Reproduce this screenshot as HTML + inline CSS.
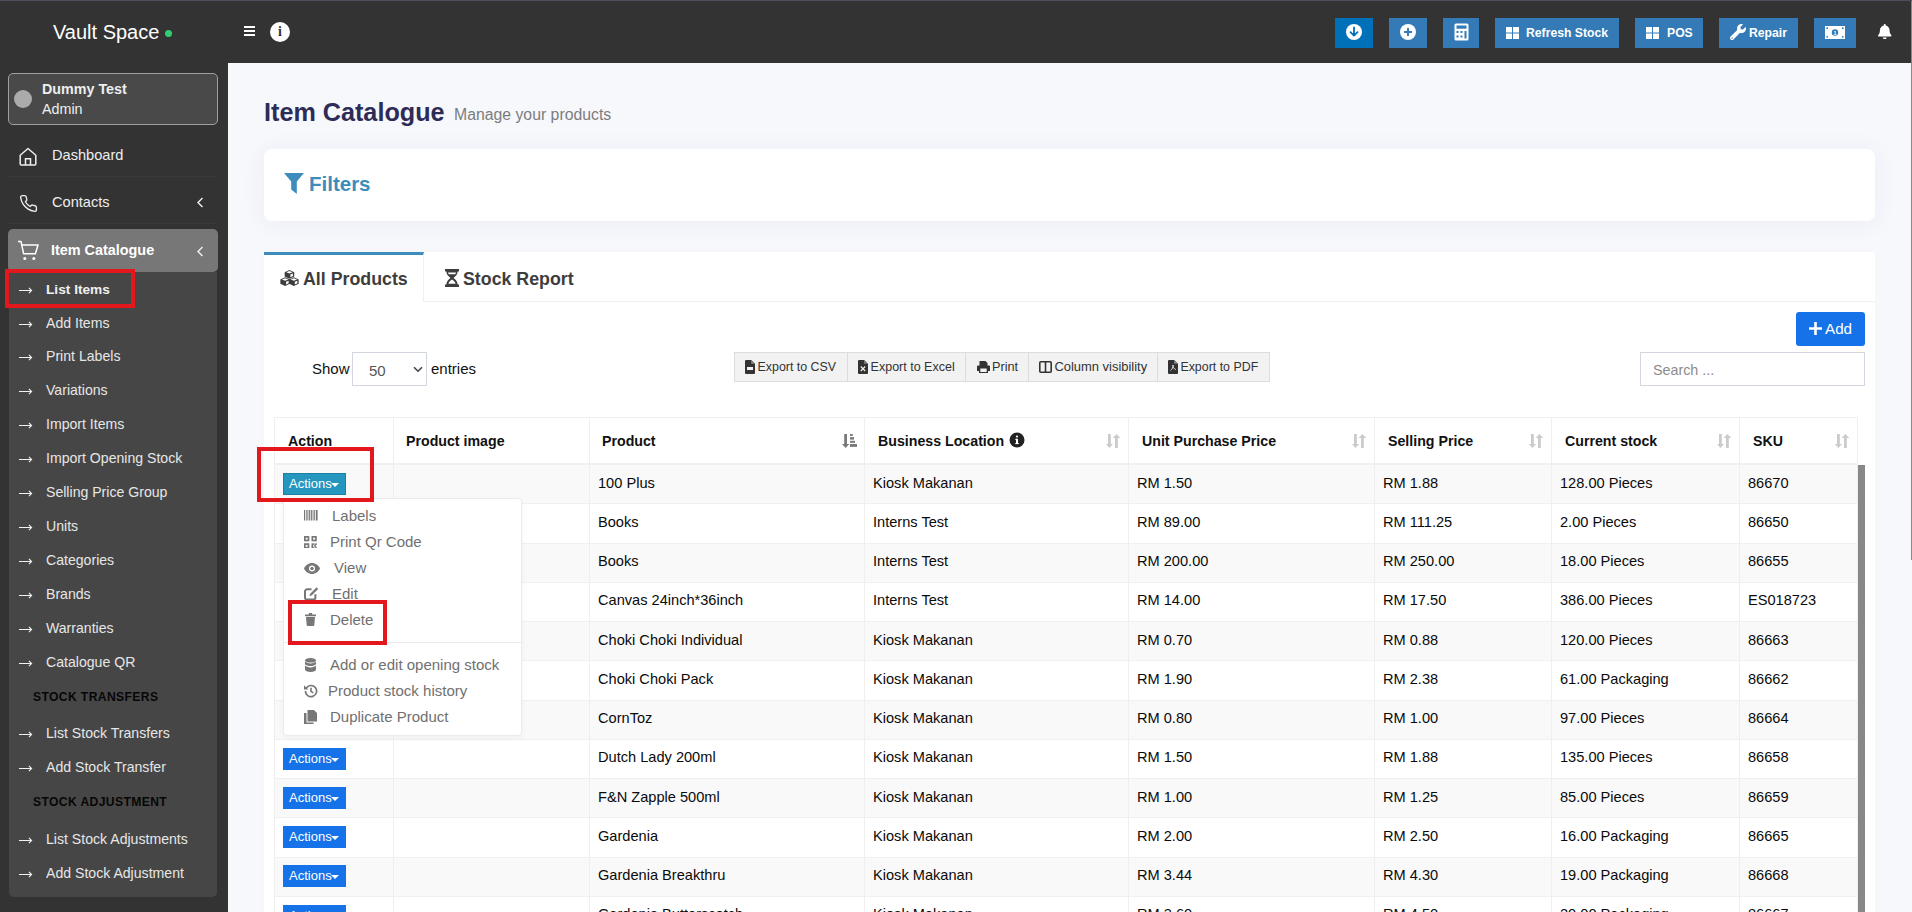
<!DOCTYPE html><html><head><meta charset="utf-8"><style>
*{box-sizing:border-box;margin:0;padding:0}
html,body{width:1912px;height:912px;overflow:hidden}
body{position:relative;background:#f7f8fc;font-family:"Liberation Sans",sans-serif;color:#222}
.a{position:absolute;white-space:nowrap}
#nav{left:0;top:0;width:1912px;height:63px;background:#333}
#topline{left:0;top:0;width:1912px;height:1px;background:#4d5059}
#side{left:0;top:63px;width:228px;height:849px;background:#333}
.brand{left:53px;top:21px;font-size:20px;line-height:23px;color:#fff}
.dot{left:165px;top:30px;width:7px;height:7px;border-radius:50%;background:#2fce73}
.tb{top:18px;height:30px;background:#337ab7;color:#fff;font-weight:bold;font-size:12.2px;line-height:30px}
.ubox{left:8px;top:73px;width:210px;height:52px;background:#494949;border:1px solid #a0a0a0;border-radius:5px}
.menu{left:52px;font-size:14.6px;line-height:17px;color:#eee}
.sep{left:8px;width:210px;height:1px;background:#3a3a3a;border-radius:1px}
.sub{left:46px;font-size:14.1px;line-height:17px;color:#e6e6e6}
.arr{left:19px;width:14px;height:2px}
.hdr{left:33px;font-size:12.1px;line-height:14px;font-weight:bold;color:#060606;letter-spacing:0.4px}
.red{border:4px solid #e3181d}
.card{background:#fff;border-radius:8px;box-shadow:0 2px 26px rgba(40,50,100,0.06)}
.th{top:419px;height:45px;font-weight:bold;font-size:14.2px;color:#111;line-height:45px}
.td{font-size:14.6px;color:#0a0a0a;line-height:16px}
.vl{width:1px;background:#efefef}
.hl{height:1px;background:#efefef}
.act{width:63px;height:22px;color:#fff;font-size:13px;line-height:22px;padding-left:6px}
.dd{font-size:15px;color:#707070;line-height:16px}
.ebtn{top:352px;height:30px;background:#f2f2f2;border:1px solid #dcdcdc;font-size:13px;line-height:28px;color:#333}
</style></head><body>
<div id="nav" class="a"></div><div id="topline" class="a"></div>
<div class="a brand">Vault Space</div><div class="a dot"></div>
<div class="a" style="left:244px;top:26.2px;width:11px;height:1.7px;background:#fff"></div>
<div class="a" style="left:244px;top:30.2px;width:11px;height:1.7px;background:#fff"></div>
<div class="a" style="left:244px;top:34.2px;width:11px;height:1.7px;background:#fff"></div>
<div class="a" style="left:270px;top:22px;width:20px;height:20px;border-radius:50%;background:#fff"></div>
<div class="a" style="left:270px;top:22px;width:20px;height:20px;font-family:'Liberation Serif',serif;font-weight:bold;font-size:14px;line-height:20px;text-align:center;color:#333">i</div>
<div class="a tb" style="left:1335px;width:38px;background:#0071b9"><svg class="a" style="left:10px;top:5px" width="18" height="18" viewBox="0 0 18 18"><circle cx="9" cy="9" r="8" fill="#fff"/><path d="M9 4.5v8M5.5 9.2L9 12.6l3.5-3.4" stroke="#0071b9" stroke-width="1.8" fill="none" stroke-linecap="round" stroke-linejoin="round"/></svg></div>
<div class="a tb" style="left:1389px;width:38px;background:#337ab7"><svg class="a" style="left:10px;top:5px" width="18" height="18" viewBox="0 0 18 18"><circle cx="9" cy="9" r="8" fill="#fff"/><path d="M9 5v8M5 9h8" stroke="#337ab7" stroke-width="1.9" fill="none"/></svg></div>
<div class="a tb" style="left:1443px;width:36px;background:#337ab7"><svg class="a" style="left:10.5px;top:5px" width="15" height="18" viewBox="0 0 15 18"><rect x="0.5" y="0.5" width="14" height="17" rx="1.5" fill="#fff"/><rect x="2.5" y="2.5" width="10" height="3.2" fill="#337ab7"/><g fill="#337ab7"><rect x="2.5" y="8" width="2" height="2"/><rect x="6.5" y="8" width="2" height="2"/><rect x="2.5" y="12.5" width="2" height="2"/><rect x="6.5" y="12.5" width="2" height="2"/><rect x="10.5" y="8" width="2" height="7.5"/></g></svg></div>
<div class="a tb" style="left:1495px;width:124px;background:#337ab7"><svg class="a" style="left:11px;top:9px" width="13" height="12" viewBox="0 0 13 12"><g fill="#fff"><rect x="0" y="0" width="6" height="5.5"/><rect x="7" y="0" width="6" height="5.5"/><rect x="0" y="6.5" width="6" height="5.5"/><rect x="7" y="6.5" width="6" height="5.5"/></g></svg><span class="a" style="left:31px;top:0">Refresh Stock</span></div>
<div class="a tb" style="left:1635px;width:68px;background:#337ab7"><svg class="a" style="left:11px;top:9px" width="13" height="12" viewBox="0 0 13 12"><g fill="#fff"><rect x="0" y="0" width="6" height="5.5"/><rect x="7" y="0" width="6" height="5.5"/><rect x="0" y="6.5" width="6" height="5.5"/><rect x="7" y="6.5" width="6" height="5.5"/></g></svg><span class="a" style="left:32px;top:0">POS</span></div>
<div class="a tb" style="left:1719px;width:79px;background:#337ab7"><svg class="a" style="left:11px;top:6px" width="16" height="16" viewBox="0 0 512 512"><path fill="#fff" d="M507.7 109.1c-2.2-9-13.5-12.1-20.1-5.5l-74.4 74.4-67.9-11.3-11.3-67.9 74.4-74.4c6.6-6.6 3.4-17.9-5.7-20.2-47.4-11.7-99.6.9-136.6 37.9-39.6 39.6-50.5 97.1-34.1 147.2L18.7 402.8c-25 25-25 65.5 0 90.5s65.5 25 90.5 0l213.2-213.2c50.1 16.7 107.5 5.7 147.4-34.2 37.1-37.1 49.7-89.3 37.9-136.8zM64 472c-13.3 0-24-10.7-24-24 0-13.3 10.7-24 24-24s24 10.7 24 24c0 13.3-10.7 24-24 24z"/></svg><span class="a" style="left:30px;top:0">Repair</span></div>
<div class="a tb" style="left:1814px;width:42px;background:#337ab7"><svg class="a" style="left:11px;top:8px" width="20" height="13" viewBox="0 0 20 13"><rect x="0" y="0" width="20" height="13" fill="#fff"/><circle cx="10" cy="6.5" r="3.2" fill="#337ab7"/><text x="10" y="8.8" font-size="5.5" font-family="Liberation Sans" font-weight="bold" fill="#fff" text-anchor="middle">1</text><g fill="#337ab7"><circle cx="2.2" cy="2.2" r="0.9"/><circle cx="17.8" cy="2.2" r="0.9"/><circle cx="2.2" cy="10.8" r="0.9"/><circle cx="17.8" cy="10.8" r="0.9"/></g></svg></div>
<svg class="a" style="left:1878px;top:24px" width="13.5" height="15.4" viewBox="0 0 448 512"><path fill="#fff" d="M224 512c35.3 0 64-28.7 64-64H160c0 35.3 28.7 64 64 64zm215.4-149.7c-19.3-20.8-55.5-52-55.5-154.3 0-77.7-54.5-139.9-127.9-155.2V32c0-17.7-14.3-32-32-32s-32 14.3-32 32v20.8C118.6 68.1 64.100 130.3 64.100 208c0 102.300-36.200 133.500-55.500 154.300-6 6.400-8.700 14.100-8.600 21.700.100 16.400 13 32 32.100 32h383.800c19.100 0 32-15.600 32.100-32 .100-7.600-2.600-15.300-8.600-21.700z"/></svg>
<div class="a" style="left:1910.6px;top:1px;width:1.4px;height:559px;background:#888"></div>
<div id="side" class="a"></div>
<div class="a ubox"></div>
<div class="a" style="left:14px;top:90px;width:18px;height:18px;border-radius:50%;background:#ababab"></div>
<div class="a" style="left:42px;top:81px;font-size:14.3px;line-height:17px;font-weight:bold;color:#eee">Dummy Test</div>
<div class="a" style="left:42px;top:101px;font-size:14.3px;line-height:17px;color:#eee">Admin</div>
<svg class="a" style="left:19px;top:147px" width="18" height="19" viewBox="0 0 18 19"><path d="M1.2 8.2L9 1.5l7.8 6.7V17a1 1 0 0 1-1 1H2.2a1 1 0 0 1-1-1z" fill="none" stroke="#eee" stroke-width="1.5" stroke-linejoin="round"/><path d="M6.5 18v-6.2h5V18" fill="none" stroke="#eee" stroke-width="1.5"/></svg>
<div class="a menu" style="top:147px">Dashboard</div>
<div class="a sep" style="top:176px"></div>
<svg class="a" style="left:19px;top:194px" width="19" height="19" viewBox="0 0 24 24"><path d="M22 16.9v3a2 2 0 0 1-2.2 2 19.8 19.8 0 0 1-8.6-3.1 19.5 19.5 0 0 1-6-6A19.8 19.8 0 0 1 2.1 4.2 2 2 0 0 1 4.1 2h3a2 2 0 0 1 2 1.7c.1 1 .4 1.9.7 2.8a2 2 0 0 1-.5 2.1L8 9.8a16 16 0 0 0 6 6l1.3-1.3a2 2 0 0 1 2.1-.4c.9.3 1.8.6 2.8.7a2 2 0 0 1 1.7 2z" fill="none" stroke="#eee" stroke-width="1.7" stroke-linejoin="round"/></svg>
<div class="a menu" style="top:194px">Contacts</div>
<svg class="a" style="left:196px;top:197px" width="8" height="11" viewBox="0 0 8 11"><path d="M6.5 1L2 5.5 6.5 10" fill="none" stroke="#f2f2f2" stroke-width="1.4"/></svg>
<div class="a sep" style="top:222.5px"></div>
<div class="a" style="left:8px;top:229px;width:210px;height:43px;background:#777;border-radius:5px"></div>
<svg class="a" style="left:17px;top:240px" width="22" height="21" viewBox="0 0 22 21"><path d="M1 1.5h3l2.6 12.2h11.8L21 5H5" fill="none" stroke="#fff" stroke-width="1.5" stroke-linejoin="round"/><circle cx="7.8" cy="18.5" r="1.5" fill="#fff"/><circle cx="16.8" cy="18.5" r="1.5" fill="#fff"/></svg>
<div class="a menu" style="left:51px;top:241.5px;font-weight:bold;color:#fff;font-size:14.4px">Item Catalogue</div>
<svg class="a" style="left:196px;top:245.5px" width="8" height="11" viewBox="0 0 8 11"><path d="M6.5 1L2 5.5 6.5 10" fill="none" stroke="#f2f2f2" stroke-width="1.4"/></svg>
<div class="a" style="left:9px;top:272px;width:208px;height:625px;background:#464646;border-radius:0 0 5px 5px"></div>
<div class="a sub" style="top:281px;font-weight:bold;color:#f0f0f0;font-size:13.7px;">List Items</div>
<svg class="a" style="left:19px;top:286px" width="14" height="8" viewBox="0 0 14 8"><path d="M0 4.5h12.6M9.9 1.9l2.7 2.6-2.7 2.6" fill="none" stroke="#f2f2f2" stroke-width="1.1"/></svg>
<div class="a sub" style="top:315px;">Add Items</div>
<svg class="a" style="left:19px;top:320px" width="14" height="8" viewBox="0 0 14 8"><path d="M0 4.5h12.6M9.9 1.9l2.7 2.6-2.7 2.6" fill="none" stroke="#f2f2f2" stroke-width="1.1"/></svg>
<div class="a sub" style="top:348px;">Print Labels</div>
<svg class="a" style="left:19px;top:353px" width="14" height="8" viewBox="0 0 14 8"><path d="M0 4.5h12.6M9.9 1.9l2.7 2.6-2.7 2.6" fill="none" stroke="#f2f2f2" stroke-width="1.1"/></svg>
<div class="a sub" style="top:382px;">Variations</div>
<svg class="a" style="left:19px;top:387px" width="14" height="8" viewBox="0 0 14 8"><path d="M0 4.5h12.6M9.9 1.9l2.7 2.6-2.7 2.6" fill="none" stroke="#f2f2f2" stroke-width="1.1"/></svg>
<div class="a sub" style="top:416px;">Import Items</div>
<svg class="a" style="left:19px;top:421px" width="14" height="8" viewBox="0 0 14 8"><path d="M0 4.5h12.6M9.9 1.9l2.7 2.6-2.7 2.6" fill="none" stroke="#f2f2f2" stroke-width="1.1"/></svg>
<div class="a sub" style="top:450px;">Import Opening Stock</div>
<svg class="a" style="left:19px;top:455px" width="14" height="8" viewBox="0 0 14 8"><path d="M0 4.5h12.6M9.9 1.9l2.7 2.6-2.7 2.6" fill="none" stroke="#f2f2f2" stroke-width="1.1"/></svg>
<div class="a sub" style="top:484px;">Selling Price Group</div>
<svg class="a" style="left:19px;top:489px" width="14" height="8" viewBox="0 0 14 8"><path d="M0 4.5h12.6M9.9 1.9l2.7 2.6-2.7 2.6" fill="none" stroke="#f2f2f2" stroke-width="1.1"/></svg>
<div class="a sub" style="top:518px;">Units</div>
<svg class="a" style="left:19px;top:523px" width="14" height="8" viewBox="0 0 14 8"><path d="M0 4.5h12.6M9.9 1.9l2.7 2.6-2.7 2.6" fill="none" stroke="#f2f2f2" stroke-width="1.1"/></svg>
<div class="a sub" style="top:552px;">Categories</div>
<svg class="a" style="left:19px;top:557px" width="14" height="8" viewBox="0 0 14 8"><path d="M0 4.5h12.6M9.9 1.9l2.7 2.6-2.7 2.6" fill="none" stroke="#f2f2f2" stroke-width="1.1"/></svg>
<div class="a sub" style="top:586px;">Brands</div>
<svg class="a" style="left:19px;top:591px" width="14" height="8" viewBox="0 0 14 8"><path d="M0 4.5h12.6M9.9 1.9l2.7 2.6-2.7 2.6" fill="none" stroke="#f2f2f2" stroke-width="1.1"/></svg>
<div class="a sub" style="top:620px;">Warranties</div>
<svg class="a" style="left:19px;top:625px" width="14" height="8" viewBox="0 0 14 8"><path d="M0 4.5h12.6M9.9 1.9l2.7 2.6-2.7 2.6" fill="none" stroke="#f2f2f2" stroke-width="1.1"/></svg>
<div class="a sub" style="top:654px;">Catalogue QR</div>
<svg class="a" style="left:19px;top:659px" width="14" height="8" viewBox="0 0 14 8"><path d="M0 4.5h12.6M9.9 1.9l2.7 2.6-2.7 2.6" fill="none" stroke="#f2f2f2" stroke-width="1.1"/></svg>
<div class="a hdr" style="top:690px">STOCK TRANSFERS</div>
<div class="a sub" style="top:725px;">List Stock Transfers</div>
<svg class="a" style="left:19px;top:730px" width="14" height="8" viewBox="0 0 14 8"><path d="M0 4.5h12.6M9.9 1.9l2.7 2.6-2.7 2.6" fill="none" stroke="#f2f2f2" stroke-width="1.1"/></svg>
<div class="a sub" style="top:759px;">Add Stock Transfer</div>
<svg class="a" style="left:19px;top:764px" width="14" height="8" viewBox="0 0 14 8"><path d="M0 4.5h12.6M9.9 1.9l2.7 2.6-2.7 2.6" fill="none" stroke="#f2f2f2" stroke-width="1.1"/></svg>
<div class="a hdr" style="top:795px">STOCK ADJUSTMENT</div>
<div class="a sub" style="top:831px;">List Stock Adjustments</div>
<svg class="a" style="left:19px;top:836px" width="14" height="8" viewBox="0 0 14 8"><path d="M0 4.5h12.6M9.9 1.9l2.7 2.6-2.7 2.6" fill="none" stroke="#f2f2f2" stroke-width="1.1"/></svg>
<div class="a sub" style="top:865px;">Add Stock Adjustment</div>
<svg class="a" style="left:19px;top:870px" width="14" height="8" viewBox="0 0 14 8"><path d="M0 4.5h12.6M9.9 1.9l2.7 2.6-2.7 2.6" fill="none" stroke="#f2f2f2" stroke-width="1.1"/></svg>
<div class="a red" style="left:5px;top:269px;width:130px;height:39px"></div>
<div class="a" style="left:264px;top:98px;font-size:25.2px;line-height:28px;font-weight:bold;color:#2d2c57">Item Catalogue</div>
<div class="a" style="left:454px;top:106px;font-size:15.8px;line-height:18px;color:#7c7c7c">Manage your products</div>
<div class="a card" style="left:264px;top:149px;width:1611px;height:72px"></div>
<svg class="a" style="left:284px;top:173px" width="20" height="21" viewBox="0 0 20 21"><path d="M0 0h20l-7.2 8.4V21L7.2 16.5V8.4z" fill="#3c8dbc"/></svg>
<div class="a" style="left:309px;top:172px;font-size:20.5px;line-height:23px;font-weight:bold;color:#3c8dbc">Filters</div>
<div class="a" style="left:264px;top:252px;width:1611px;height:700px;background:#fff;border-radius:3px;box-shadow:0 0 10px rgba(40,50,100,0.015)"></div>
<div class="a" style="left:264px;top:301px;width:1611px;height:1px;background:#f0f0f0"></div>
<div class="a" style="left:264px;top:252px;width:160px;height:50px;background:#fff;border-top:3px solid #3c8dbc;border-right:1px solid #f0f0f0"></div>
<svg class="a" style="left:280px;top:270px" width="19" height="16" viewBox="0 0 18.2 15.9"><path d="M4.30 2.20 L9.05 0.00 L13.80 2.20 L13.80 6.50 L9.05 8.70 L4.30 6.50z M0.00 9.40 L4.75 7.20 L9.50 9.40 L9.50 13.70 L4.75 15.90 L0.00 13.70z M8.70 9.40 L13.45 7.20 L18.20 9.40 L18.20 13.70 L13.45 15.90 L8.70 13.70z" fill="#3d3d3d"/><path d="M5.90 2.25 L9.05 0.95 L12.20 2.25 L9.05 3.55z M10.00 4.50 L12.50 3.40 L12.50 6.00 L10.00 7.20z M1.60 9.45 L4.75 8.15 L7.90 9.45 L4.75 10.75z M5.70 11.70 L8.20 10.60 L8.20 13.20 L5.70 14.40z M10.30 9.45 L13.45 8.15 L16.60 9.45 L13.45 10.75z M14.40 11.70 L16.90 10.60 L16.90 13.20 L14.40 14.40z" fill="#fff"/></svg>
<div class="a" style="left:303px;top:269px;font-size:17.8px;line-height:20px;font-weight:bold;color:#3d3d3d">All Products</div>
<svg class="a" style="left:445px;top:269px" width="14" height="18" viewBox="0 0 14 18"><path d="M0 0h14v2.6h-1.4c0 2.8-1.9 4.8-4.1 6.4 2.2 1.6 4.1 3.6 4.1 6.4H14V18H0v-2.6h1.4c0-2.8 1.9-4.8 4.1-6.4C3.3 7.4 1.4 5.4 1.4 2.6H0z" fill="#3d3d3d"/><path d="M3 3.4h8c-.2 .8-.5 1.3-.8 1.8H3.8C3.5 4.7 3.2 4.2 3 3.4z M7 10.4c1.9 1.3 3.3 2.6 3.6 4.3H3.4C3.7 13 5.1 11.7 7 10.4z" fill="#fff"/></svg>
<div class="a" style="left:463px;top:269px;font-size:17.8px;line-height:20px;font-weight:bold;color:#3d3d3d">Stock Report</div>
<div class="a" style="left:1796px;top:312px;width:69px;height:34px;background:#1572e8;border-radius:3px;color:#fff;font-size:15px;line-height:34px"><svg class="a" style="left:13px;top:10px" width="13" height="13" viewBox="0 0 13 13"><path d="M6.5 0v13M0 6.5h13" stroke="#fff" stroke-width="2.6"/></svg><span class="a" style="left:29px;top:0;font-size:15.2px">Add</span></div>
<div class="a" style="left:1640px;top:352px;width:225px;height:34px;border:1px solid #d2d6de;background:#fff"><span class="a" style="left:12px;top:9px;font-size:14.3px;line-height:16px;color:#8b8b8b">Search ...</span></div>
<div class="a" style="left:312px;top:360px;font-size:15px;line-height:17px;color:#111">Show</div>
<div class="a" style="left:352px;top:352px;width:75px;height:34px;border:1px solid #d2d6de;background:#fff"><span class="a" style="left:16px;top:9px;font-size:15px;line-height:17px;color:#555">50</span><svg class="a" style="left:60px;top:13px" width="10" height="7" viewBox="0 0 10 7"><path d="M1 1.2l4 4 4-4" fill="none" stroke="#444" stroke-width="1.6"/></svg></div>
<div class="a" style="left:431px;top:360px;font-size:15px;line-height:17px;color:#111">entries</div>
<div class="a ebtn" style="left:734px;width:114px"><svg class="a" style="left:10px;top:7px" width="10" height="14" viewBox="0 0 10 14"><path d="M0 1a1 1 0 0 1 1-1h5.2L10 3.8V13a1 1 0 0 1-1 1H1a1 1 0 0 1-1-1z" fill="#333"/><path d="M6.2 0v3.8H10" fill="#888"/><rect x="2" y="7" width="6" height="3" fill="#f2f2f2"/></svg><span class="a" style="left:22.6px;top:0;font-size:12.4px">Export to CSV</span></div>
<div class="a ebtn" style="left:847px;width:119px"><svg class="a" style="left:10px;top:7px" width="10" height="14" viewBox="0 0 10 14"><path d="M0 1a1 1 0 0 1 1-1h5.2L10 3.8V13a1 1 0 0 1-1 1H1a1 1 0 0 1-1-1z" fill="#333"/><path d="M6.2 0v3.8H10" fill="#888"/><path d="M2.8 6.5l4.4 4.5M7.2 6.5l-4.4 4.5" stroke="#f2f2f2" stroke-width="1.1"/></svg><span class="a" style="left:22.6px;top:0;font-size:12.5px">Export to Excel</span></div>
<div class="a ebtn" style="left:965px;width:64px"><svg class="a" style="left:11px;top:8px" width="13" height="12" viewBox="0 0 13 12"><path d="M2.5 0h6l2 2v2.5h-8z M1 4.5h11a1 1 0 0 1 1 1V10h-2v2H2v-2H0V5.5a1 1 0 0 1 1-1z" fill="#333"/><rect x="3.3" y="7.5" width="6.4" height="3.5" fill="#f2f2f2"/></svg><span class="a" style="left:26px;top:0;font-size:12.7px">Print</span></div>
<div class="a ebtn" style="left:1028px;width:130px"><svg class="a" style="left:10px;top:8px" width="13" height="12" viewBox="0 0 13 12"><rect x="0.8" y="0.8" width="11.4" height="10.4" rx="1" fill="none" stroke="#333" stroke-width="1.6"/><path d="M6.5 1v10" stroke="#333" stroke-width="1.6"/></svg><span class="a" style="left:25.4px;top:0;font-size:12.95px">Column visibility</span></div>
<div class="a ebtn" style="left:1157px;width:113px"><svg class="a" style="left:10px;top:7px" width="10" height="14" viewBox="0 0 10 14"><path d="M0 1a1 1 0 0 1 1-1h5.2L10 3.8V13a1 1 0 0 1-1 1H1a1 1 0 0 1-1-1z" fill="#333"/><path d="M6.2 0v3.8H10" fill="#888"/><path d="M2.5 10.5c1.5-1 3-3.5 2.5-5.5-.5 2 1 4 2.8 4.5" fill="none" stroke="#f2f2f2" stroke-width="0.9"/></svg><span class="a" style="left:22.4px;top:0;font-size:12.4px">Export to PDF</span></div>
<div class="a" style="left:274px;top:417px;width:1584px;height:1px;background:#efefef"></div>
<div class="a" style="left:274px;top:463px;width:1584px;height:2px;background:#f0f0f0"></div>
<div class="a" style="left:274px;top:465.00px;width:1584px;height:38.30px;background:#f9f9f9"></div>
<div class="a" style="left:274px;top:504.30px;width:1584px;height:38.25px;background:#fff"></div>
<div class="a hl" style="left:274px;top:503.30px;width:1584px;background:#f0f0f0"></div>
<div class="a" style="left:274px;top:543.55px;width:1584px;height:38.25px;background:#f9f9f9"></div>
<div class="a hl" style="left:274px;top:542.55px;width:1584px;background:#f0f0f0"></div>
<div class="a" style="left:274px;top:582.80px;width:1584px;height:38.25px;background:#fff"></div>
<div class="a hl" style="left:274px;top:581.80px;width:1584px;background:#f0f0f0"></div>
<div class="a" style="left:274px;top:622.05px;width:1584px;height:38.25px;background:#f9f9f9"></div>
<div class="a hl" style="left:274px;top:621.05px;width:1584px;background:#f0f0f0"></div>
<div class="a" style="left:274px;top:661.30px;width:1584px;height:38.25px;background:#fff"></div>
<div class="a hl" style="left:274px;top:660.30px;width:1584px;background:#f0f0f0"></div>
<div class="a" style="left:274px;top:700.55px;width:1584px;height:38.25px;background:#f9f9f9"></div>
<div class="a hl" style="left:274px;top:699.55px;width:1584px;background:#f0f0f0"></div>
<div class="a" style="left:274px;top:739.80px;width:1584px;height:38.25px;background:#fff"></div>
<div class="a hl" style="left:274px;top:738.80px;width:1584px;background:#f0f0f0"></div>
<div class="a" style="left:274px;top:779.05px;width:1584px;height:38.25px;background:#f9f9f9"></div>
<div class="a hl" style="left:274px;top:778.05px;width:1584px;background:#f0f0f0"></div>
<div class="a" style="left:274px;top:818.30px;width:1584px;height:38.25px;background:#fff"></div>
<div class="a hl" style="left:274px;top:817.30px;width:1584px;background:#f0f0f0"></div>
<div class="a" style="left:274px;top:857.55px;width:1584px;height:38.25px;background:#f9f9f9"></div>
<div class="a hl" style="left:274px;top:856.55px;width:1584px;background:#f0f0f0"></div>
<div class="a" style="left:274px;top:896.80px;width:1584px;height:38.25px;background:#fff"></div>
<div class="a hl" style="left:274px;top:895.80px;width:1584px;background:#f0f0f0"></div>
<div class="a vl" style="left:274px;top:417px;height:495px"></div>
<div class="a vl" style="left:393px;top:417px;height:495px"></div>
<div class="a vl" style="left:589px;top:417px;height:495px"></div>
<div class="a vl" style="left:864px;top:417px;height:495px"></div>
<div class="a vl" style="left:1128px;top:417px;height:495px"></div>
<div class="a vl" style="left:1374px;top:417px;height:495px"></div>
<div class="a vl" style="left:1551px;top:417px;height:495px"></div>
<div class="a vl" style="left:1739px;top:417px;height:495px"></div>
<div class="a vl" style="left:1857px;top:417px;height:495px"></div>
<div class="a th" style="left:288px">Action</div>
<div class="a th" style="left:406px">Product image</div>
<div class="a th" style="left:602px">Product</div>
<div class="a th" style="left:878px">Business Location</div>
<div class="a th" style="left:1142px">Unit Purchase Price</div>
<div class="a th" style="left:1388px">Selling Price</div>
<div class="a th" style="left:1565px">Current stock</div>
<div class="a th" style="left:1753px">SKU</div>
<svg class="a" style="left:1009px;top:432px" width="16" height="16" viewBox="0 0 16 16"><circle cx="8" cy="8" r="7.5" fill="#222"/><rect x="7" y="6.8" width="2" height="5" fill="#fff"/><rect x="6.2" y="11" width="3.6" height="1.1" fill="#fff"/><rect x="6.2" y="6.8" width="2" height="1" fill="#fff"/><circle cx="8" cy="4.5" r="1.1" fill="#fff"/></svg>
<svg class="a" style="left:842px;top:434px" width="15" height="14" viewBox="0 0 15 14"><g fill="#7a7a7a"><path d="M2.2 0h2.8v10H7.2L3.6 14 0 10H2.2z"/><rect x="8" y="0" width="2.8" height="1.9"/><rect x="8" y="3.1" width="4" height="2.5"/><rect x="8" y="6.8" width="5" height="2"/><rect x="8" y="10" width="7" height="2.9"/></g></svg>
<svg class="a" style="left:1106px;top:434px" width="15" height="14" viewBox="0 0 15 14"><g fill="#cbcbcb"><path d="M2 0h2.8v10H7L3.4 14 0 10H2z"/><path d="M9 14h2.8V4H14.3L10.4 0 6.6 4H9z"/></g></svg>
<svg class="a" style="left:1352px;top:434px" width="15" height="14" viewBox="0 0 15 14"><g fill="#cbcbcb"><path d="M2 0h2.8v10H7L3.4 14 0 10H2z"/><path d="M9 14h2.8V4H14.3L10.4 0 6.6 4H9z"/></g></svg>
<svg class="a" style="left:1529px;top:434px" width="15" height="14" viewBox="0 0 15 14"><g fill="#cbcbcb"><path d="M2 0h2.8v10H7L3.4 14 0 10H2z"/><path d="M9 14h2.8V4H14.3L10.4 0 6.6 4H9z"/></g></svg>
<svg class="a" style="left:1717px;top:434px" width="15" height="14" viewBox="0 0 15 14"><g fill="#cbcbcb"><path d="M2 0h2.8v10H7L3.4 14 0 10H2z"/><path d="M9 14h2.8V4H14.3L10.4 0 6.6 4H9z"/></g></svg>
<svg class="a" style="left:1835px;top:434px" width="15" height="14" viewBox="0 0 15 14"><g fill="#cbcbcb"><path d="M2 0h2.8v10H7L3.4 14 0 10H2z"/><path d="M9 14h2.8V4H14.3L10.4 0 6.6 4H9z"/></g></svg>
<div class="a td" style="left:598px;top:474.50px">100 Plus</div>
<div class="a td" style="left:873px;top:474.50px">Kiosk Makanan</div>
<div class="a td" style="left:1137px;top:474.50px">RM 1.50</div>
<div class="a td" style="left:1383px;top:474.50px">RM 1.88</div>
<div class="a td" style="left:1560px;top:474.50px">128.00 Pieces</div>
<div class="a td" style="left:1748px;top:474.50px">86670</div>
<div class="a act" style="left:283px;top:472.95px;background:#2596be;border:1px solid #1d7fa3;line-height:20px;padding-left:5px">Actions<svg class="a" style="left:47px;top:9px" width="8" height="4" viewBox="0 0 8 4"><path d="M0 0h8L4 4z" fill="#fff"/></svg></div>
<div class="a td" style="left:598px;top:513.77px">Books</div>
<div class="a td" style="left:873px;top:513.77px">Interns Test</div>
<div class="a td" style="left:1137px;top:513.77px">RM 89.00</div>
<div class="a td" style="left:1383px;top:513.77px">RM 111.25</div>
<div class="a td" style="left:1560px;top:513.77px">2.00 Pieces</div>
<div class="a td" style="left:1748px;top:513.77px">86650</div>
<div class="a td" style="left:598px;top:553.02px">Books</div>
<div class="a td" style="left:873px;top:553.02px">Interns Test</div>
<div class="a td" style="left:1137px;top:553.02px">RM 200.00</div>
<div class="a td" style="left:1383px;top:553.02px">RM 250.00</div>
<div class="a td" style="left:1560px;top:553.02px">18.00 Pieces</div>
<div class="a td" style="left:1748px;top:553.02px">86655</div>
<div class="a td" style="left:598px;top:592.27px">Canvas 24inch*36inch</div>
<div class="a td" style="left:873px;top:592.27px">Interns Test</div>
<div class="a td" style="left:1137px;top:592.27px">RM 14.00</div>
<div class="a td" style="left:1383px;top:592.27px">RM 17.50</div>
<div class="a td" style="left:1560px;top:592.27px">386.00 Pieces</div>
<div class="a td" style="left:1748px;top:592.27px">ES018723</div>
<div class="a td" style="left:598px;top:631.52px">Choki Choki Individual</div>
<div class="a td" style="left:873px;top:631.52px">Kiosk Makanan</div>
<div class="a td" style="left:1137px;top:631.52px">RM 0.70</div>
<div class="a td" style="left:1383px;top:631.52px">RM 0.88</div>
<div class="a td" style="left:1560px;top:631.52px">120.00 Pieces</div>
<div class="a td" style="left:1748px;top:631.52px">86663</div>
<div class="a td" style="left:598px;top:670.77px">Choki Choki Pack</div>
<div class="a td" style="left:873px;top:670.77px">Kiosk Makanan</div>
<div class="a td" style="left:1137px;top:670.77px">RM 1.90</div>
<div class="a td" style="left:1383px;top:670.77px">RM 2.38</div>
<div class="a td" style="left:1560px;top:670.77px">61.00 Packaging</div>
<div class="a td" style="left:1748px;top:670.77px">86662</div>
<div class="a td" style="left:598px;top:710.02px">CornToz</div>
<div class="a td" style="left:873px;top:710.02px">Kiosk Makanan</div>
<div class="a td" style="left:1137px;top:710.02px">RM 0.80</div>
<div class="a td" style="left:1383px;top:710.02px">RM 1.00</div>
<div class="a td" style="left:1560px;top:710.02px">97.00 Pieces</div>
<div class="a td" style="left:1748px;top:710.02px">86664</div>
<div class="a td" style="left:598px;top:749.27px">Dutch Lady 200ml</div>
<div class="a td" style="left:873px;top:749.27px">Kiosk Makanan</div>
<div class="a td" style="left:1137px;top:749.27px">RM 1.50</div>
<div class="a td" style="left:1383px;top:749.27px">RM 1.88</div>
<div class="a td" style="left:1560px;top:749.27px">135.00 Pieces</div>
<div class="a td" style="left:1748px;top:749.27px">86658</div>
<div class="a act" style="left:283px;top:747.72px;background:#1572e8">Actions<svg class="a" style="left:48px;top:10px" width="8" height="4" viewBox="0 0 8 4"><path d="M0 0h8L4 4z" fill="#fff"/></svg></div>
<div class="a td" style="left:598px;top:788.52px">F&amp;N Zapple 500ml</div>
<div class="a td" style="left:873px;top:788.52px">Kiosk Makanan</div>
<div class="a td" style="left:1137px;top:788.52px">RM 1.00</div>
<div class="a td" style="left:1383px;top:788.52px">RM 1.25</div>
<div class="a td" style="left:1560px;top:788.52px">85.00 Pieces</div>
<div class="a td" style="left:1748px;top:788.52px">86659</div>
<div class="a act" style="left:283px;top:786.97px;background:#1572e8">Actions<svg class="a" style="left:48px;top:10px" width="8" height="4" viewBox="0 0 8 4"><path d="M0 0h8L4 4z" fill="#fff"/></svg></div>
<div class="a td" style="left:598px;top:827.77px">Gardenia</div>
<div class="a td" style="left:873px;top:827.77px">Kiosk Makanan</div>
<div class="a td" style="left:1137px;top:827.77px">RM 2.00</div>
<div class="a td" style="left:1383px;top:827.77px">RM 2.50</div>
<div class="a td" style="left:1560px;top:827.77px">16.00 Packaging</div>
<div class="a td" style="left:1748px;top:827.77px">86665</div>
<div class="a act" style="left:283px;top:826.22px;background:#1572e8">Actions<svg class="a" style="left:48px;top:10px" width="8" height="4" viewBox="0 0 8 4"><path d="M0 0h8L4 4z" fill="#fff"/></svg></div>
<div class="a td" style="left:598px;top:867.02px">Gardenia Breakthru</div>
<div class="a td" style="left:873px;top:867.02px">Kiosk Makanan</div>
<div class="a td" style="left:1137px;top:867.02px">RM 3.44</div>
<div class="a td" style="left:1383px;top:867.02px">RM 4.30</div>
<div class="a td" style="left:1560px;top:867.02px">19.00 Packaging</div>
<div class="a td" style="left:1748px;top:867.02px">86668</div>
<div class="a act" style="left:283px;top:865.47px;background:#1572e8">Actions<svg class="a" style="left:48px;top:10px" width="8" height="4" viewBox="0 0 8 4"><path d="M0 0h8L4 4z" fill="#fff"/></svg></div>
<div class="a td" style="left:598px;top:906.27px">Gardenia Butterscotch</div>
<div class="a td" style="left:873px;top:906.27px">Kiosk Makanan</div>
<div class="a td" style="left:1137px;top:906.27px">RM 3.60</div>
<div class="a td" style="left:1383px;top:906.27px">RM 4.50</div>
<div class="a td" style="left:1560px;top:906.27px">20.00 Packaging</div>
<div class="a td" style="left:1748px;top:906.27px">86667</div>
<div class="a act" style="left:283px;top:904.72px;background:#1572e8">Actions<svg class="a" style="left:48px;top:10px" width="8" height="4" viewBox="0 0 8 4"><path d="M0 0h8L4 4z" fill="#fff"/></svg></div>
<div class="a" style="left:1858px;top:465px;width:7px;height:447px;background:#888"></div>
<div class="a" style="left:283px;top:497.5px;width:239px;height:238px;background:#fff;border:1px solid #ebebeb;border-radius:4px;box-shadow:0 2px 6px rgba(0,0,0,0.04)"></div>
<div class="a" style="left:284px;top:642px;width:237px;height:1px;background:#e9e9e9"></div>
<div class="a dd" style="left:332px;top:508px">Labels</div>
<div class="a dd" style="left:330px;top:534px">Print Qr Code</div>
<div class="a dd" style="left:334px;top:560px">View</div>
<div class="a dd" style="left:332px;top:586px">Edit</div>
<div class="a dd" style="left:330px;top:612px">Delete</div>
<div class="a dd" style="left:330px;top:657px">Add or edit opening stock</div>
<div class="a dd" style="left:328px;top:683px">Product stock history</div>
<div class="a dd" style="left:330px;top:709px">Duplicate Product</div>
<svg class="a" style="left:304px;top:510px" width="14" height="11" viewBox="0 0 14 11"><g fill="#777"><rect x="0" y="0" width="1" height="10.5"/><rect x="1.8" y="0" width="0.9" height="10.5"/><rect x="3.4" y="0" width="1" height="10.5"/><rect x="5.1" y="0" width="0.9" height="10.5"/><rect x="6.7" y="0" width="1.2" height="10.5"/><rect x="8.6" y="0" width="0.9" height="10.5"/><rect x="10.2" y="0" width="1" height="10.5"/><rect x="12" y="0" width="1.6" height="10.5"/></g></svg>
<svg class="a" style="left:304px;top:535.5px" width="13" height="12.5" viewBox="0 0 13 12.5"><g fill="none" stroke="#777" stroke-width="1.7"><rect x="0.85" y="0.85" width="3.6" height="3.6"/><rect x="8.35" y="0.85" width="3.6" height="3.6"/><rect x="0.85" y="8.1" width="3.6" height="3.6"/></g><g fill="#777"><rect x="7.5" y="7.3" width="1.7" height="5.2"/><rect x="9.2" y="7.3" width="1.3" height="1.7"/><rect x="10.3" y="8.8" width="1.7" height="2"/><rect x="11.2" y="7.3" width="1.6" height="1.7"/><rect x="11.2" y="10.8" width="1.6" height="1.7"/><rect x="9.2" y="10.8" width="1.2" height="1.7"/></g></svg>
<svg class="a" style="left:304px;top:563px" width="16" height="11" viewBox="0 0 16 11"><path d="M8 0C4.5 0 1.5 2.3 0 5.5 1.5 8.7 4.5 11 8 11s6.5-2.3 8-5.5C14.5 2.3 11.5 0 8 0z" fill="#777"/><circle cx="8" cy="5.5" r="3" fill="#fff"/><circle cx="8" cy="5.5" r="1.7" fill="#777"/></svg>
<svg class="a" style="left:304px;top:586.5px" width="14.5" height="13.5" viewBox="0 0 14.5 13.5"><path d="M7.5 2.2H3.2A2.2 2.2 0 0 0 1 4.4v6A2.2 2.2 0 0 0 3.2 12.6h6a2.2 2.2 0 0 0 2.2-2.2V7.2" fill="none" stroke="#777" stroke-width="2"/><path d="M12.6 0.3l1.6 1.6-6.6 6.6-2.2.6.6-2.2z" fill="#777"/></svg>
<svg class="a" style="left:305px;top:613px" width="11" height="13" viewBox="0 0 11 13"><path d="M0 1.5h3.5L4.2 0h2.6l.7 1.5H11v1.8H0z M1 4h9l-.7 8a1 1 0 0 1-1 1H2.7a1 1 0 0 1-1-1z" fill="#777"/></svg>
<svg class="a" style="left:305px;top:658px" width="11" height="14" viewBox="0 0 11 14"><g fill="#777"><ellipse cx="5.5" cy="2.3" rx="5.5" ry="2.3"/><path d="M0 3.6c1 1.2 3.2 1.8 5.5 1.8S10 4.8 11 3.6v2.7c-1 1.2-3.2 1.8-5.5 1.8S1 7.5 0 6.3z"/><path d="M0 7.6c1 1.2 3.2 1.8 5.5 1.8S10 8.8 11 7.6v3.9C11 12.9 8.5 14 5.5 14S0 12.9 0 11.5z"/></g></svg>
<svg class="a" style="left:304px;top:684px" width="14" height="14" viewBox="0 0 14 14"><path d="M2.2 4.2A5.6 5.6 0 1 1 1.4 7" fill="none" stroke="#777" stroke-width="1.7"/><path d="M0 1.2v4.3h4.3z" fill="#777"/><path d="M7 3.8V7.3l2.3 1.5" fill="none" stroke="#777" stroke-width="1.6"/></svg>
<svg class="a" style="left:304px;top:710px" width="13" height="14" viewBox="0 0 13 14"><path d="M3.5 0h6.5L13 3v8.5H3.5z" fill="#777"/><path d="M0 3h2.5v9.5H9.5V14H0z" fill="#777"/></svg>
<div class="a red" style="left:288px;top:600px;width:99px;height:45px"></div>
<div class="a red" style="left:257px;top:447px;width:117px;height:55px"></div>
</body></html>
